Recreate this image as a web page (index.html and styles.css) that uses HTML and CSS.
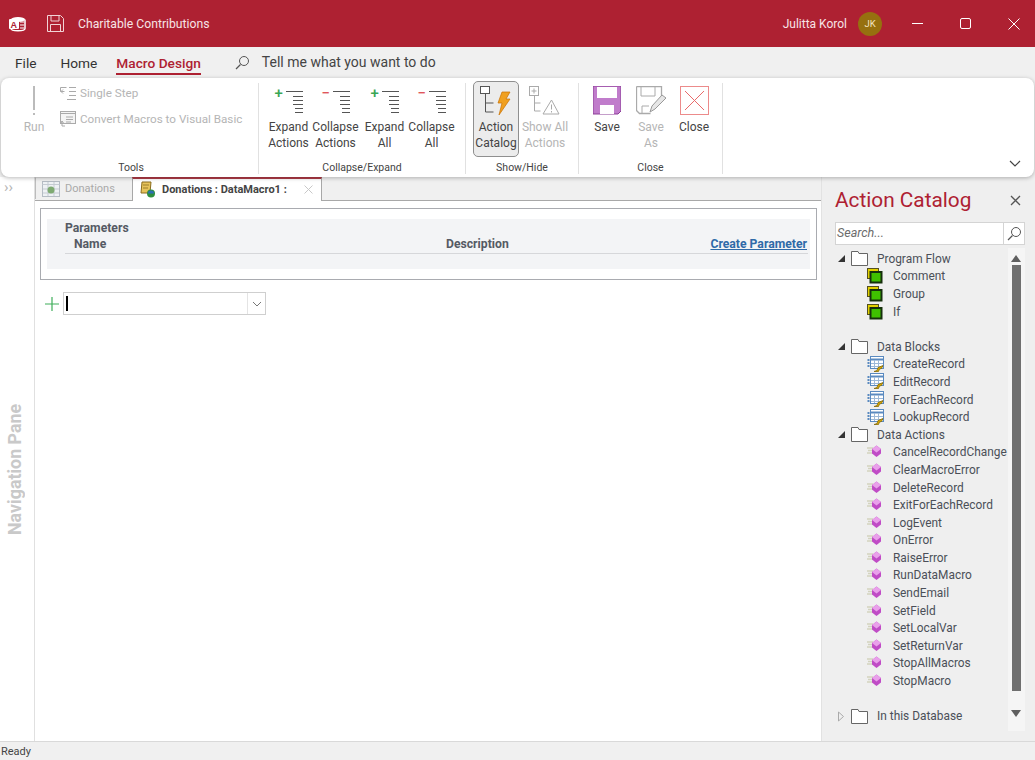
FILE: index.html
```html
<!DOCTYPE html>
<html lang="en">
<head>
<meta charset="utf-8">
<title>Charitable Contributions</title>
<link rel="stylesheet" href="styles.css">
</head>
<body>
<svg class="defs" width="0" height="0" aria-hidden="true">
  <symbol id="lines" viewBox="0 0 17 22">
    <path d="M0 .5h17M7 5.5h10M7 9.5h10M7 13.500h10M9 17.5h8M9 21.5h8" stroke="#555" stroke-width="1" fill="none"/>
  </symbol>
  <symbol id="folder" viewBox="0 0 17 15">
    <path d="M.5 14.500V.5h6.500l1 2h8.500v12z" fill="#fff" stroke="#666"/>
  </symbol>
  <symbol id="flow" viewBox="0 0 16 16">
    <rect x=".5" y=".5" width="11" height="10" fill="#e2d000" stroke="#555020"/>
    <rect x="3.500" y="4" width="11" height="10.500" fill="#3fc000" stroke="#16300c" stroke-width="2"/>
  </symbol>
  <symbol id="block" viewBox="0 0 17 17">
    <rect x="3.500" y=".5" width="13" height="12" fill="#fff" stroke="#5a8ac0"/>
    <path d="M3.500 3.500h13" stroke="#5a8ac0" stroke-width="2"/>
    <path d="M7.500 4v8M11.500 4v8M4 7.500h12M4 10.500h12" stroke="#9db9d8"/>
    <path d="M1.500 3v9" stroke="#5a8ac0" stroke-dasharray="2 1" stroke-width="2"/>
    <path d="M7 15.500l3-1 1-3 5-2-1.500 3-2 .5-1 2.500z" fill="#d8a800" stroke="#7a6000" stroke-width=".7"/>
  </symbol>
  <symbol id="action" viewBox="0 0 15 14">
    <path d="M0 3h6M1 5.500h5M0 8h6" stroke="#d3d3be" stroke-width="1.500"/>
    <path d="M9.500 .5l4.500 3.500v4.500l-4.500 3.500-4.500-3.500V4z" fill="#c04cc6"/>
    <path d="M9.500 .5l4.500 3.500-4.500 3.500-4.500-3.500z" fill="#e9a0ea"/>
  </symbol>
</svg>

<header class="titlebar">
  <div class="title-left">
    <svg class="app-icon" width="17" height="16" viewBox="0 0 17 16"><ellipse cx="9" cy="3.500" rx="7" ry="2.500" fill="#fff"/><path d="M2 3.500v9c0 3 14 3 14 0v-9" fill="none" stroke="#fff" stroke-width="1.500"/><rect x="0" y="3" width="10" height="10" rx="1" fill="#fff"/><text x="1.500" y="11.500" class="app-a">A</text><path d="M11 6h4M11 9h4M11 12h4" stroke="#fff" stroke-width="1.200"/></svg>
    <svg class="save-icon" width="17" height="17" viewBox="0 0 17 17"><path d="M.5.5h13l3 3v13H.5z" fill="none" stroke="#f1d3d6"/><path d="M4 1v5h8V1M3.500 16.500v-7h10v7" fill="none" stroke="#f1d3d6"/></svg>
    <span class="doc-title">Charitable Contributions</span>
  </div>
  <div class="title-right">
    <span class="user">Julitta Korol</span>
    <span class="avatar">JK</span>
    <div class="winbtns">
      <svg width="11" height="11" viewBox="0 0 11 11"><path d="M0 5.500h11" stroke="#fff"/></svg>
      <svg width="11" height="11" viewBox="0 0 11 11"><rect x=".5" y=".5" width="10" height="10" rx="1.500" fill="none" stroke="#fff"/></svg>
      <svg width="12" height="12" viewBox="0 0 12 12"><path d="M.5.500l11 11M11.500.500l-11 11" stroke="#fff"/></svg>
    </div>
  </div>
</header>

<nav class="tabs">
  <span class="tab tab-file">File</span>
  <span class="tab tab-home">Home</span>
  <span class="tab tab-active">Macro Design</span>
  <svg class="tell-icon" width="15" height="15" viewBox="0 0 15 15"><circle cx="9" cy="6" r="4.500" fill="none" stroke="#555"/><path d="M5.500 9.500L1 14" stroke="#555" stroke-width="1.300"/></svg>
  <span class="tell">Tell me what you want to do</span>
</nav>

<section class="ribbon">
  <div class="group g-tools">
    <div class="group-body tools-body">
      <div class="rbtn rbtn-run disabled">
        <svg class="ricon" width="32" height="32" viewBox="0 0 32 32"><path d="M16 0v24M16 27v2" stroke="#bbb" stroke-width="2"/></svg>
        <span>Run</span>
      </div>
      <div class="tools-list disabled">
        <div class="small-btn">
          <svg width="16" height="14" viewBox="0 0 16 14"><path d="M.5 1.500h6M.5 1.500v4h4M3 3.500l-2 2 2 2M9 1.500h7M9 5.500h7M9 9.500h7M7 13.500h9" fill="none" stroke="#aaa"/></svg>
          <span>Single Step</span>
        </div>
        <div class="small-btn">
          <svg width="16" height="16" viewBox="0 0 16 16"><rect x=".5" y=".5" width="15" height="12" fill="#f4f4f4" stroke="#aaa"/><path d="M.5 2.500h15M6 6h7M6 8.500h7M6 11h5" stroke="#aaa"/><path d="M5 15h-3v-5M1 12l1-2 1.500 2" fill="none" stroke="#aaa"/></svg>
          <span>Convert Macros to Visual Basic</span>
        </div>
      </div>
    </div>
    <div class="group-label">Tools</div>
  </div>

  <div class="group g-collapse">
    <div class="group-body">
      <div class="rbtn rbtn-ce"><span class="ce-icon"><b class="plus">+</b><svg width="17" height="22"><use href="#lines"/></svg></span><span>Expand<br>Actions</span></div>
      <div class="rbtn rbtn-ce"><span class="ce-icon"><b class="minus">−</b><svg width="17" height="22"><use href="#lines"/></svg></span><span>Collapse<br>Actions</span></div>
      <div class="rbtn rbtn-ce rbtn-ce-all"><span class="ce-icon"><b class="plus">+</b><svg width="17" height="22"><use href="#lines"/></svg></span><span>Expand<br>All</span></div>
      <div class="rbtn rbtn-ce"><span class="ce-icon"><b class="minus">−</b><svg width="17" height="22"><use href="#lines"/></svg></span><span>Collapse<br>All</span></div>
    </div>
    <div class="group-label">Collapse/Expand</div>
  </div>

  <div class="group g-show">
    <div class="group-body">
      <div class="rbtn rbtn-catalog">
        <svg class="ricon" width="32" height="32" viewBox="0 0 32 32"><rect x=".5" y=".5" width="9" height="7" fill="#fff" stroke="#555"/><path d="M5.500 8v18h8M5.500 17h8" fill="none" stroke="#555"/><path d="M22 6h8l-4 7h4L19 29l3-12h-4z" fill="#f0a020" stroke="#c87000" stroke-width=".7"/></svg>
        <span>Action<br>Catalog</span>
      </div>
      <div class="rbtn rbtn-showall disabled">
        <svg class="ricon" width="32" height="32" viewBox="0 0 32 32"><rect x=".5" y=".5" width="9" height="9" fill="#fff" stroke="#aaa"/><path d="M2.500 5h5M5 2.500v5M5.500 10v15h6M5.500 17h6" fill="none" stroke="#aaa"/><path d="M22.500 14l7.500 14H14z" fill="#fff" stroke="#aaa"/><path d="M22.500 18.500v5M22.500 25v1.500" stroke="#aaa"/></svg>
        <span>Show All<br>Actions</span>
      </div>
    </div>
    <div class="group-label">Show/Hide</div>
  </div>

  <div class="group g-close">
    <div class="group-body">
      <div class="rbtn rbtn-save">
        <svg class="ricon" width="28" height="32" viewBox="0 0 28 32"><path d="M0 0h28v25l-3 3H0z" fill="#c07ccb"/><path d="M0 0h28v25l-3 3H0z" fill="none" stroke="#8b3f96" stroke-width="1"/><rect x="4" y="1" width="20" height="11" fill="#fff"/><rect x="7" y="19" width="14" height="9" fill="#fff"/></svg>
        <span>Save</span>
      </div>
      <div class="rbtn rbtn-saveas disabled">
        <svg class="ricon" width="30" height="32" viewBox="0 0 30 32"><path d="M.5.500h25v10M.5.500v24l3 3h11" fill="none" stroke="#aaa" stroke-width="1.300"/><path d="M5 1v9h14V1M6 27v-7h7" fill="none" stroke="#aaa"/><path d="M14 26l2-6L26 9l4 3-11 11z" fill="#e6e6e6" stroke="#999"/></svg>
        <span>Save<br>As</span>
      </div>
      <div class="rbtn rbtn-close">
        <svg class="ricon" width="29" height="32" viewBox="0 0 29 32"><rect x=".5" y=".5" width="28" height="28" fill="#fff" stroke="#ec8b8b"/><path d="M5 5l19 19M24 5L5 24" stroke="#e86a6a"/></svg>
        <span>Close</span>
      </div>
    </div>
    <div class="group-label">Close</div>
  </div>

  <svg class="ribbon-caret" width="12" height="7" viewBox="0 0 12 7"><path d="M1 1l5 5 5-5" fill="none" stroke="#444" stroke-width="1.200"/></svg>
</section>

<main class="workspace">
  <aside class="navpane">
    <span class="nav-chevron">››</span>
    <span class="nav-label">Navigation Pane</span>
  </aside>

  <section class="document">
    <div class="doc-tabs">
      <div class="doc-tab doc-tab-off">
        <svg width="18" height="16" viewBox="0 0 18 16"><rect x=".5" y=".5" width="17" height="15" fill="#eef1f4" stroke="#b5bcc4"/><path d="M.5 3.500h17M6 1v14M12 1v14M1 8h16M1 12h16" stroke="#c5cbd2"/><circle cx="9" cy="9" r="3.500" fill="#7eaa72"/></svg>
        <span>Donations</span>
      </div>
      <div class="doc-tab doc-tab-on">
        <svg width="16" height="17" viewBox="0 0 16 17"><path d="M2 1h9l-1 11H1z" fill="#e7c35a" stroke="#8a6d1e"/><path d="M3 4h6M3 7h5" stroke="#8a6d1e" stroke-width=".8"/><circle cx="11" cy="12.500" r="4" fill="#2f8f3f"/><path d="M8 12.500a3 3 0 0 1 6 0z" fill="#2d6fb5"/></svg>
        <span>Donations : DataMacro1 :</span>
        <svg class="doc-tab-x" width="9" height="9" viewBox="0 0 9 9"><path d="M.5.500l8 8M8.500.500l-8 8" stroke="#c8c8c8"/></svg>
      </div>
    </div>
    <div class="macro-area">
      <div class="params-box">
        <div class="params-inner">
          <div class="params-title">Parameters</div>
          <div class="params-row">
            <span class="p-name">Name</span>
            <span class="p-desc">Description</span>
            <a class="p-create">Create Parameter</a>
          </div>
        </div>
      </div>
      <div class="add-row">
        <svg width="16" height="16" viewBox="0 0 16 16"><path d="M8 1v14M1 8h14" stroke="#3fae5a" stroke-width="1.200"/></svg>
        <div class="combo"><span class="caret"></span><span class="combo-btn"><svg width="10" height="6" viewBox="0 0 10 6"><path d="M1 1l4 4 4-4" fill="none" stroke="#777"/></svg></span></div>
      </div>
    </div>
  </section>

  <aside class="catalog">
    <div class="cat-head">
      <h2>Action Catalog</h2>
      <svg width="11" height="11" viewBox="0 0 11 11"><path d="M1 1l9 9M10 1l-9 9" stroke="#555" stroke-width="1.300"/></svg>
    </div>
    <div class="cat-search">
      <span class="cat-input">Search...</span>
      <span class="cat-btn"><svg width="15" height="15" viewBox="0 0 15 15"><circle cx="9" cy="6" r="4.500" fill="none" stroke="#555"/><path d="M5.500 9.500L1 14" stroke="#555" stroke-width="1.300"/></svg></span>
    </div>
    <div class="cat-body">
      <ul class="tree">
        <li class="folder"><i class="tri"></i><svg width="17" height="15"><use href="#folder"/></svg><span>Program Flow</span></li>
        <li class="item"><svg width="16" height="16"><use href="#flow"/></svg><span>Comment</span></li>
        <li class="item"><svg width="16" height="16"><use href="#flow"/></svg><span>Group</span></li>
        <li class="item last"><svg width="16" height="16"><use href="#flow"/></svg><span>If</span></li>
        <li class="folder"><i class="tri"></i><svg width="17" height="15"><use href="#folder"/></svg><span>Data Blocks</span></li>
        <li class="item"><svg width="17" height="17"><use href="#block"/></svg><span>CreateRecord</span></li>
        <li class="item"><svg width="17" height="17"><use href="#block"/></svg><span>EditRecord</span></li>
        <li class="item"><svg width="17" height="17"><use href="#block"/></svg><span>ForEachRecord</span></li>
        <li class="item"><svg width="17" height="17"><use href="#block"/></svg><span>LookupRecord</span></li>
        <li class="folder"><i class="tri"></i><svg width="17" height="15"><use href="#folder"/></svg><span>Data Actions</span></li>
        <li class="item"><svg width="15" height="14"><use href="#action"/></svg><span>CancelRecordChange</span></li>
        <li class="item"><svg width="15" height="14"><use href="#action"/></svg><span>ClearMacroError</span></li>
        <li class="item"><svg width="15" height="14"><use href="#action"/></svg><span>DeleteRecord</span></li>
        <li class="item"><svg width="15" height="14"><use href="#action"/></svg><span>ExitForEachRecord</span></li>
        <li class="item"><svg width="15" height="14"><use href="#action"/></svg><span>LogEvent</span></li>
        <li class="item"><svg width="15" height="14"><use href="#action"/></svg><span>OnError</span></li>
        <li class="item"><svg width="15" height="14"><use href="#action"/></svg><span>RaiseError</span></li>
        <li class="item"><svg width="15" height="14"><use href="#action"/></svg><span>RunDataMacro</span></li>
        <li class="item"><svg width="15" height="14"><use href="#action"/></svg><span>SendEmail</span></li>
        <li class="item"><svg width="15" height="14"><use href="#action"/></svg><span>SetField</span></li>
        <li class="item"><svg width="15" height="14"><use href="#action"/></svg><span>SetLocalVar</span></li>
        <li class="item"><svg width="15" height="14"><use href="#action"/></svg><span>SetReturnVar</span></li>
        <li class="item"><svg width="15" height="14"><use href="#action"/></svg><span>StopAllMacros</span></li>
        <li class="item last"><svg width="15" height="14"><use href="#action"/></svg><span>StopMacro</span></li>
        <li class="folder"><svg class="tri-closed" width="7" height="11" viewBox="0 0 7 11"><path d="M.5 1l5 4.500-5 4.500z" fill="none" stroke="#aaa"/></svg><svg width="17" height="15"><use href="#folder"/></svg><span>In this Database</span></li>
      </ul>
      <div class="scrollbar">
        <i class="sb-up"></i>
        <i class="sb-thumb"></i>
        <i class="sb-down"></i>
      </div>
    </div>
  </aside>
</main>

<footer class="status">Ready</footer>
</body>
</html>
```

FILE: styles.css
```css
* { box-sizing: border-box; }
html, body { margin: 0; padding: 0; }
body {
  width: 1035px;
  height: 760px;
  overflow: hidden;
  display: flex;
  flex-direction: column;
  background: #f0f0f0;
  color: #444;
  font-family: Roboto, "Noto Sans", sans-serif;
  font-size: 12px;
}
.defs { position: absolute; }

/* title bar */
.titlebar {
  height: 47px;
  flex: none;
  display: flex;
  justify-content: space-between;
  align-items: center;
  background: #ae2132;
  color: #f7e4e6;
}
.title-left { display: flex; align-items: center; padding-left: 9px; }
.app-a { font: 700 9px "Liberation Sans", sans-serif; fill: #ae2132; }
.save-icon { margin-left: 21px; }
.doc-title { margin-left: 14px; font-size: 12.2px; }
.title-right { display: flex; align-items: center; }
.user { font-size: 12px; }
.avatar {
  width: 24px;
  height: 24px;
  margin-left: 11px;
  border-radius: 50%;
  background: #96700f;
  color: #f3e3c0;
  font-size: 9.5px;
  display: flex;
  align-items: center;
  justify-content: center;
}
.winbtns { display: flex; align-items: center; gap: 37px; margin: 0 15px 0 30px; }

/* ribbon tabs */
.tabs {
  height: 31px;
  flex: none;
  display: flex;
  align-items: center;
  font-size: 13.700px;
  color: #333;
  padding-left: 15px;
}
.tab { line-height: 22px; }
.tab-home { margin-left: 24px; }
.tab-active {
  margin-left: 19px;
  color: #ae2132;
  font-weight: 500;
  border-bottom: 2px solid #ae2132;
  line-height: 20px;
  margin-top: 2px;
}
.tell-icon { margin-left: 34px; }
.tell { margin: 0 0 1px 12px; font-size: 14px; color: #444; }

/* ribbon */
.ribbon {
  position: relative;
  z-index: 2;
  height: 99px;
  flex: none;
  margin: 0 1px;
  padding: 5px 0 0;
  display: flex;
  background: #fff;
  border-radius: 8px;
  box-shadow: 0 1px 4px rgba(0, 0, 0, .28);
}
.group {
  display: flex;
  flex-direction: column;
  border-right: 1px solid #e1e1e1;
  margin-bottom: 3px;
}
.g-tools { width: 258px; }
.g-collapse { width: 207px; }
.g-show { width: 113px; }
.g-close { width: 144px; }
.group-body { flex: 1; display: flex; }
.group-label { height: 13px; text-align: center; font-size: 10.500px; line-height: 14px; color: #444; }
.g-tools .group-label { padding-left: 3px; }
.rbtn {
  display: flex;
  flex-direction: column;
  align-items: center;
  text-align: center;
  line-height: 16px;
  white-space: nowrap;
  font-size: 12px;
  color: #444;
}
.disabled, .disabled span { color: #b5b5b5; }
.ricon { display: block; margin-bottom: 1px; }
.rbtn-run { width: 48px; margin-left: 9px; padding-top: 3px; }
.tools-list { display: flex; flex-direction: column; gap: 6px; margin-left: 2px; }
.small-btn { display: flex; align-items: center; gap: 4px; height: 20px; font-size: 11.700px; white-space: nowrap; }
.small-btn span { line-height: 20px; }
.rbtn-ce { width: 47px; padding-top: 3px; }
.rbtn-ce-all { margin-left: 2px; }
.g-collapse .group-body { padding-left: 6px; }
.ce-icon { position: relative; display: block; width: 28px; height: 33px; }
.ce-icon svg { position: absolute; right: 0; top: 5px; }
.ce-icon b { position: absolute; left: 0; top: 0; font-weight: 500; font-size: 15px; line-height: 14px; }
.plus { color: #3aa655; }
.minus { color: #e0565b; }
.rbtn-catalog {
  width: 46px;
  height: 76px;
  margin: -2px 0 0 7px;
  padding-top: 4px;
  background: #ececec;
  border: 1px solid #8f8f8f;
  border-radius: 5px;
}
.rbtn-showall { width: 54px; margin-left: -1px; padding-top: 3px; }
.rbtn-save { width: 40px; margin-left: 8px; padding-top: 3px; }
.rbtn-saveas { width: 46px; padding-top: 3px; margin-left: 1px; }
.rbtn-close { width: 40px; padding-top: 3px; }
.ribbon-caret { position: absolute; right: 13px; bottom: 10px; }

/* workspace */
.workspace { flex: 1; min-height: 0; display: flex; background: #fff; }
.navpane {
  width: 35px;
  flex: none;
  position: relative;
  background: #fff;
  border-right: 1px solid #e0e0e0;
}
.nav-chevron { position: absolute; left: 4px; top: 3px; color: #b5b5b5; font-size: 15px; line-height: 14px; }
.nav-label {
  position: absolute;
  left: 6px;
  top: 227px;
  writing-mode: vertical-rl;
  transform: rotate(180deg);
  font-weight: 700;
  font-size: 17.800px;
  line-height: 18px;
  color: #c9c9c9;
}
.document { flex: 1; min-width: 0; display: flex; flex-direction: column; }
.doc-tabs {
  height: 24px;
  flex: none;
  display: flex;
  background: #f0f0f0;
  border-bottom: 1px solid #a8a8a8;
}
.doc-tab { display: flex; align-items: center; font-size: 11px; height: 22px; }
.doc-tab-off {
  width: 97px;
  padding-left: 6px;
  gap: 5px;
  color: #a9a9a9;
  border-left: 1px solid #bcbcbc;
  border-top: 1px solid #e0e0e0;
}
.doc-tab-on {
  width: 190px;
  height: 24px;
  padding: 0 0 2px 7px;
  gap: 6px;
  background: #fff;
  color: #444;
  font-weight: 700;
  border-top: 2px solid #b13b47;
  border-right: 1px solid #a8a8a8;
  border-left: 1px solid #a8a8a8;
}
.doc-tab-x { margin-left: 11px; }
.macro-area { flex: 1; padding: 7px 4px 0 5px; background: #fff; }
.params-box {
  height: 72px;
  border: 1px solid #a9abb0;
  padding: 10px 6px 0;
}
.params-inner {
  height: 50px;
  background: #f3f4f6;
  padding: 1px 2px 0 18px;
  font-size: 12.200px;
  font-weight: 700;
  color: #555a64;
}
.params-title { line-height: 17px; }
.params-row {
  display: flex;
  height: 17px;
  line-height: 15px;
  border-bottom: 1px solid #d6d7da;
}
.p-name { width: 372px; margin-left: 9px; }
.p-desc { flex: 1; }
.p-create { color: #2f6aa8; text-decoration: underline; padding-right: 1px; }
.add-row { display: flex; align-items: center; gap: 3px; margin: 12px 0 0 4px; }
.combo {
  position: relative;
  width: 203px;
  height: 23px;
  background: #fff;
  border: 1px solid #cfcfcf;
}
.caret { position: absolute; left: 2px; top: 3px; width: 1px; height: 15px; border-left: 2px solid #000; }
.combo-btn {
  position: absolute;
  right: 0;
  top: 0;
  width: 18px;
  height: 21px;
  border-left: 1px solid #e4e4e4;
  display: flex;
  align-items: center;
  justify-content: center;
}

/* action catalog */
.catalog {
  width: 214px;
  flex: none;
  background: #efefef;
  border-left: 1px solid #e2e2e2;
  padding: 9px 10px 0 12px;
  color: #4b4f58;
}
.cat-head { display: flex; justify-content: space-between; align-items: center; height: 28px; padding-right: 4px; }
.cat-head h2 { margin: 0 0 0 1px; font-weight: 400; font-size: 20.800px; line-height: 28px; color: #ae2132; }
.cat-search { display: flex; height: 23px; margin: 8px 0 0 1px; background: #fff; border: 1px solid #d4d4d4; }
.cat-input { flex: 1; font-style: italic; font-size: 12.500px; line-height: 20px; padding-left: 1px; color: #6c6c6c; }
.cat-btn { width: 21px; border-left: 1px solid #d4d4d4; display: flex; align-items: center; justify-content: center; }
.cat-body { position: relative; display: flex; margin-top: 3px; }
.tree { list-style: none; margin: 0; padding: 2px 0 0; flex: 1; font-size: 11.900px; white-space: nowrap; }
.tree li { display: flex; align-items: center; height: 17.600px; }
.tree .folder { padding-left: 4px; }
.tree .folder svg { margin-left: 6px; }
.tree .folder .tri-closed { margin-left: 0; }
.tree .folder span { margin-left: 9px; }
.tree .item { padding-left: 33px; }
.tree .item svg { flex: none; }
.tree .item span { position: absolute; left: 59px; }
.tree .last { margin-bottom: 17.600px; }
.tri { width: 0; height: 0; border-style: solid; border-width: 0 0 7px 7px; border-color: transparent transparent #333 transparent; display: block; }
.scrollbar { width: 17px; flex: none; height: 483px; position: relative; background: #f5f5f5; }
.scrollbar i { display: block; position: absolute; }
.sb-up { left: 3px; top: 7px; border-left: 5px solid transparent; border-right: 5px solid transparent; border-bottom: 7px solid #5f5f5f; }
.sb-thumb { left: 4px; top: 17px; width: 9px; height: 426px; background: #6f6f6f; }
.sb-down { left: 3px; bottom: 14px; border-left: 5px solid transparent; border-right: 5px solid transparent; border-top: 7px solid #5f5f5f; }

/* status bar */
.status {
  height: 19px;
  flex: none;
  background: #f0f0f0;
  border-top: 1px solid #d9d9d9;
  padding-left: 1px;
  font-size: 11px;
  line-height: 20px;
  color: #444;
}
```
